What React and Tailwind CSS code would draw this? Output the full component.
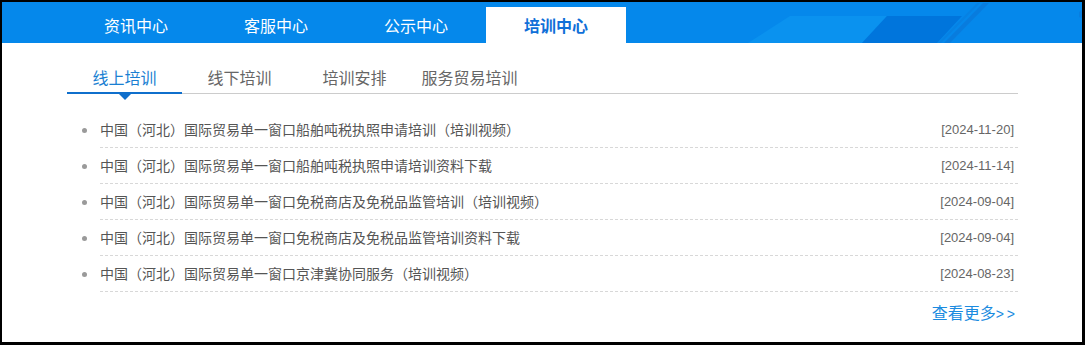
import React from "react";

const mainTabs = ["资讯中心", "客服中心", "公示中心", "培训中心"];
const subTabs = ["线上培训", "线下培训", "培训安排", "服务贸易培训"];
const items = [
  ["中国（河北）国际贸易单一窗口船舶吨税执照申请培训（培训视频）", "[2024-11-20]"],
  ["中国（河北）国际贸易单一窗口船舶吨税执照申请培训资料下载", "[2024-11-14]"],
  ["中国（河北）国际贸易单一窗口免税商店及免税品监管培训（培训视频）", "[2024-09-04]"],
  ["中国（河北）国际贸易单一窗口免税商店及免税品监管培训资料下载", "[2024-09-04]"],
  ["中国（河北）国际贸易单一窗口京津冀协同服务（培训视频）", "[2024-08-23]"],
];

const cjk = { fontFamily: '"Noto Sans CJK SC", "Noto Sans", sans-serif' };

export default function App() {
  return (
    <div
      className="w-[1085px] h-[345px] bg-white border-black border-t-2 border-l-2 border-r-[3px] border-b-[3px] flex flex-col"
      style={cjk}
    >
      <div className="relative h-[41px] bg-[#0588eb] flex items-end pl-[64px] shrink-0">
        <svg
          className="absolute left-0 top-0 pointer-events-none"
          width="1080"
          height="41"
          viewBox="0 0 1080 41"
        >
          <polygon points="788,14 885,14 860,41 746,41" fill="#0a92ef" />
          <polygon points="885,14 960,14 935,41 860,41" fill="#0075dc" />
          <polygon points="981,1 987,1 948,41 942,41" fill="#0a78d8" opacity="0.7" />
          <polygon points="975,1 978,1 939,41 936,41" fill="#0a78d8" opacity="0.4" />
          <polygon points="1077,10 1080,8 1080,16 1077,15" fill="#0a78d8" opacity="0.6" />
        </svg>
        {mainTabs.map((t, i) => (
          <div
            key={t}
            className={
              "relative w-[140px] h-[36px] flex items-center justify-center text-[16px] leading-[20px] " +
              (i === 3 ? "bg-white text-[#0f6fd8] font-bold" : "text-white")
            }
          >
            {t}
          </div>
        ))}
      </div>

      <div className="ml-[65px] w-[951px] flex flex-col">
        <div className="flex border-b border-[#cccccc] h-[51px]">
          {subTabs.map((t, i) => (
            <div
              key={t}
              className={
                "relative w-[115px] h-[50px] flex items-end justify-center pb-[4px] text-[16px] leading-[24px] " +
                (i === 0 ? "text-[#1a7fd2]" : "text-[#666666]")
              }
            >
              {t}
              {i === 0 && (
                <>
                  <span className="absolute left-0 right-0 bottom-[-1px] h-[2px] bg-[#0f6fcc]" />
                  <span className="absolute left-1/2 -translate-x-1/2 top-[51px] w-0 h-0 border-l-[6px] border-r-[6px] border-t-[6px] border-l-transparent border-r-transparent border-t-[#0f6fcc]" />
                </>
              )}
            </div>
          ))}
        </div>

        <ul className="mt-[18px]">
          {items.map(([title, date], i) => (
            <li key={i} className="flex h-[36px]">
              <span className="w-[33px] flex items-center pl-[15px]">
                <span className="w-[5px] h-[5px] rounded-full bg-[#9a9a9a]" />
              </span>
              <div className="flex-1 flex items-center justify-between border-b border-dashed border-[#d8d8d8] pr-[4px]">
                <span className="text-[14px] text-[#555555]">{title}</span>
                <span
                  className="text-[13px] text-[#666666]"
                  style={{ fontFamily: '"Liberation Sans", Arial, sans-serif' }}
                >
                  {date}
                </span>
              </div>
            </li>
          ))}
        </ul>

        <div className="mt-[8px] flex justify-end">
          <a className="text-[16px] leading-[24px] text-[#1b8be0] cursor-pointer">
            查看更多
            <span
              className="text-[14px] tracking-[3px]"
              style={{ fontFamily: '"Liberation Sans", Arial, sans-serif' }}
            >
              &gt;&gt;
            </span>
          </a>
        </div>
      </div>
    </div>
  );
}
